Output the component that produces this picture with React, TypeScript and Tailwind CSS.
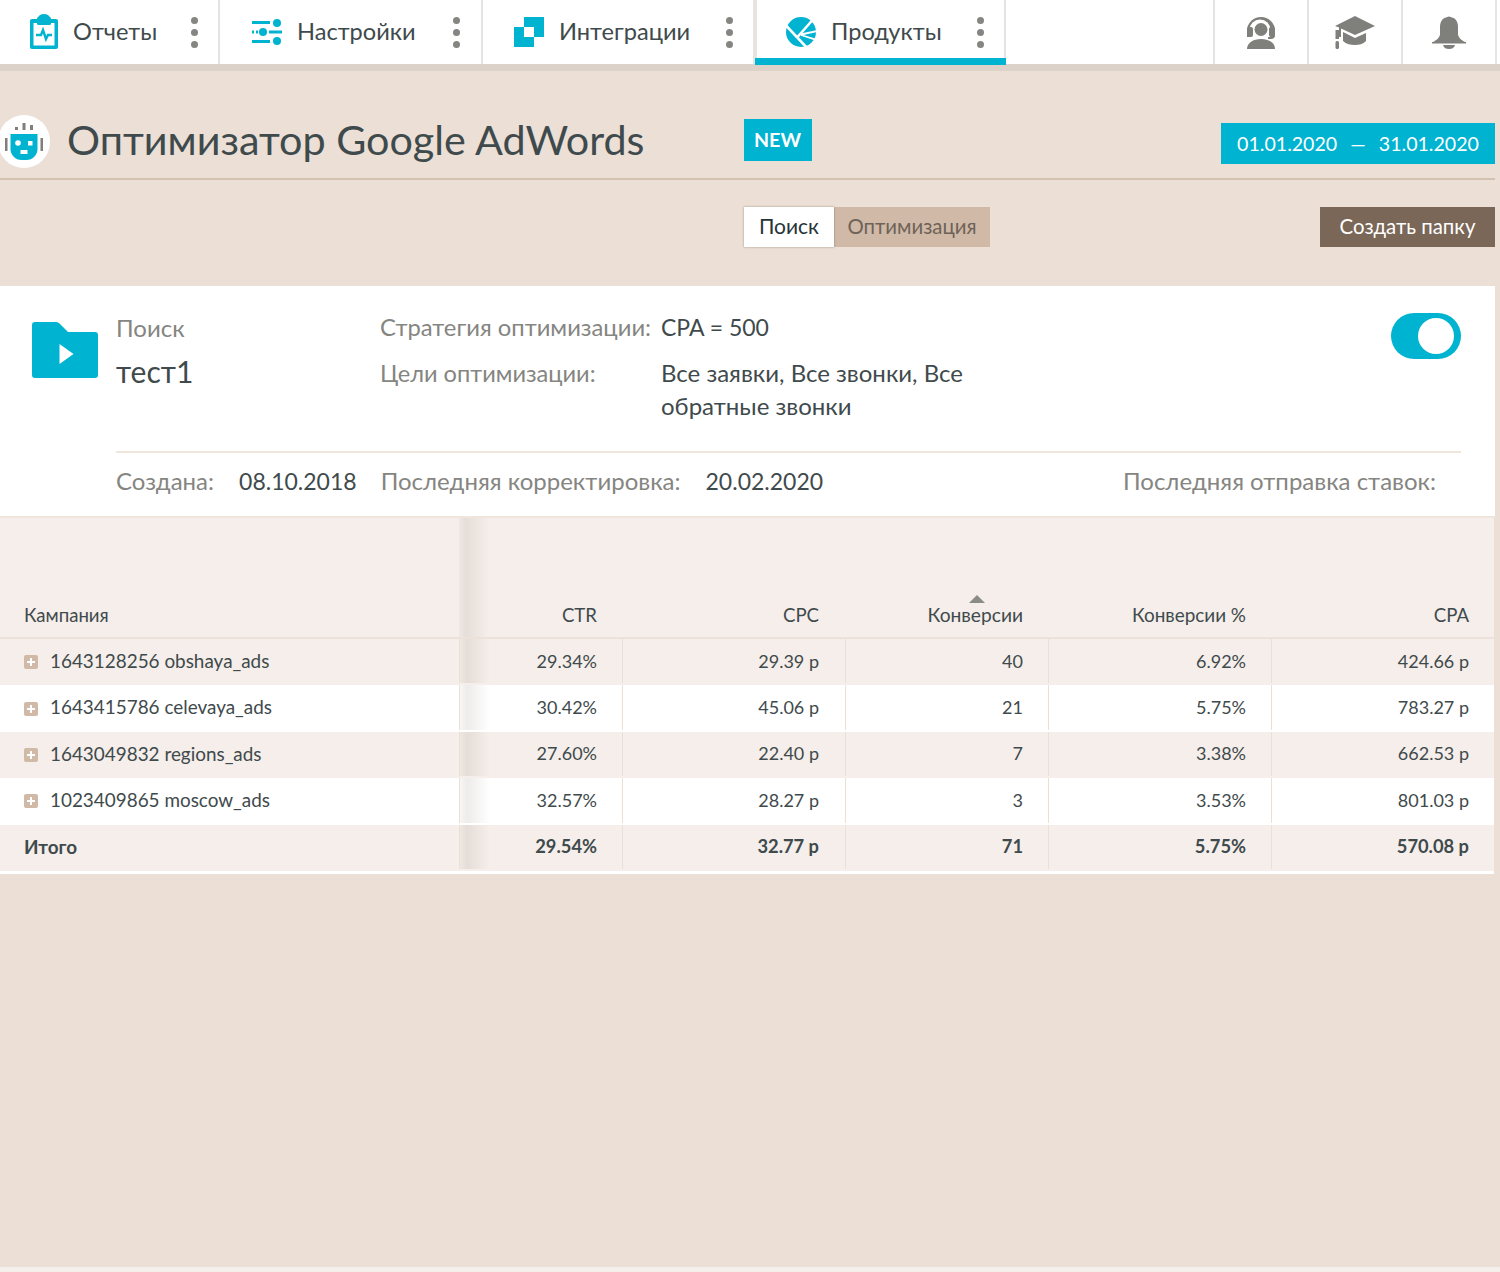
import React from "react";

const Dots = () => (
  <div className="flex flex-col gap-[5px]">
    <span className="w-[7px] h-[7px] rounded-full bg-[#858581]" />
    <span className="w-[7px] h-[7px] rounded-full bg-[#858581]" />
    <span className="w-[7px] h-[7px] rounded-full bg-[#858581]" />
  </div>
);

const C = "#00b3d0";
const G = "#7f7f7b";

const ReportIcon = () => (
  <svg width="30" height="36" viewBox="0 0 30 36">
    <path d="M3 5h6V4a6 4 0 0 1 12 0v1h6a2 2 0 0 1 2 2v26a2 2 0 0 1-2 2H3a2 2 0 0 1-2-2V7a2 2 0 0 1 2-2z" fill={C} />
    <rect x="4.500" y="9" width="21" height="22.500" fill="#fff" />
    <rect x="8" y="3" width="14" height="8" rx="1.500" fill={C} />
    <path d="M7 21h5l2-5 3 9 2-4h4" fill="none" stroke={C} strokeWidth="2.400" />
  </svg>
);

const SettingsIcon = () => (
  <svg width="30" height="28" viewBox="0 0 30 28">
    <rect x="0" y="3" width="18" height="3" fill={C} />
    <circle cx="25" cy="5" r="4" fill={C} />
    <rect x="0" y="12.500" width="2" height="3" fill={C} />
    <rect x="4" y="12.500" width="2" height="3" fill={C} />
    <circle cx="11" cy="14" r="4" fill={C} />
    <rect x="17" y="12.500" width="13" height="3" fill={C} />
    <rect x="0" y="22" width="18" height="3" fill={C} />
    <circle cx="25" cy="23" r="4" fill={C} />
  </svg>
);

const IntegrationIcon = () => (
  <svg width="30" height="30" viewBox="0 0 30 30">
    <path d="M10 0h20v20h-10v10H0V10h10z" fill={C} />
    <rect x="10" y="10" width="10" height="10" fill="#fff" />
  </svg>
);

const ProductIcon = () => (
  <svg width="30" height="30" viewBox="0 0 30 30">
    <circle cx="15" cy="15" r="15" fill={C} />
    <path d="M0 8.500L23 33" stroke="#fff" strokeWidth="2.600" />
    <path d="M11.500 20L27 2.500" stroke="#fff" strokeWidth="2.600" />
    <path d="M15 17.500L31 14M15 18L31 23" stroke="#fff" strokeWidth="1.800" />
  </svg>
);

const SupportIcon = () => (
  <svg width="30" height="33" viewBox="0 0 30 33">
    <path d="M1 15a14 14 0 0 1 28 0v4a4 4 0 0 1-4 4h-3v-2h2.500V14a10.500 10.500 0 0 0-21 0v7H1z" fill={G} />
    <circle cx="15" cy="13.500" r="6.500" fill={G} />
    <path d="M1 33c0-6 6-10 14-10s14 4 14 10z" fill={G} />
    <rect x="1" y="11" width="6" height="10" rx="2" fill={G} />
    <rect x="23" y="11" width="6" height="10" rx="2" fill={G} />
  </svg>
);

const CapIcon = () => (
  <svg width="40" height="33" viewBox="0 0 40 33">
    <path d="M20 0L40 10 20 19 6 12.500V21H4V11.500L0 10z" fill={G} />
    <path d="M8 16l12 6 11-5v8c-3 3-7 4-11 4s-9-1-12-4z" fill={G} />
    <rect x="0.500" y="25" width="3.500" height="8" rx="1.500" fill={G} />
    <rect x="0.500" y="14" width="3.500" height="9" fill={G} />
  </svg>
);

const BellIcon = () => (
  <svg width="34" height="33" viewBox="0 0 34 33">
    <circle cx="17" cy="3" r="2.500" fill={G} />
    <path d="M17 1c6 0 9 4 9 10v7c0 3 3 6 7 8v1H1v-1c4-2 7-5 7-8v-7C8 5 11 1 17 1z" fill={G} />
    <rect x="0" y="26" width="34" height="1.500" fill={G} />
    <path d="M11 29h12c-1 3-3 4-6 4s-5-1-6-4z" fill={G} />
  </svg>
);

const RobotIcon = () => (
  <div className="w-[52px] h-[53px] -ml-[2px] rounded-full bg-white flex items-center justify-center shrink-0">
    <svg width="38" height="38" viewBox="0 0 38 38">
      <rect x="10" y="5" width="3" height="3" fill={G} />
      <rect x="17.500" y="1" width="3" height="7" fill={G} />
      <rect x="25" y="3" width="3" height="5" fill={G} />
      <rect x="0" y="16" width="2.500" height="13" fill={G} />
      <rect x="35.500" y="16" width="2.500" height="13" fill={G} />
      <path d="M5.500 12h27v15a11 11 0 0 1-11 11h-5a11 11 0 0 1-11-11z" fill={C} />
      <circle cx="13" cy="21" r="2.800" fill="#fff" />
      <rect x="23" y="19" width="4.500" height="4.500" fill="#fff" />
      <rect x="15.500" y="28" width="7" height="4" fill="#fff" />
    </svg>
  </div>
);

const FolderIcon = () => (
  <svg width="66" height="56" viewBox="0 0 66 56" className="shrink-0 -mt-[1px]">
    <path d="M3 0h21c2 0 3 1 4 2l8 8h27a3 3 0 0 1 3 3v40a3 3 0 0 1-3 3H3a3 3 0 0 1-3-3V3a3 3 0 0 1 3-3z" fill={C} />
    <path d="M27.500 22l14 10-14 10z" fill="#fff" />
  </svg>
);

const Tab = ({ icon, label, cls, gap, active }: { icon: React.ReactNode; label: string; cls: string; gap: string; active?: boolean }) => (
  <div className={`relative h-[64px] flex items-center border-r-2 border-[#e6e3e0] ${cls} ${active ? "border-l-2" : ""}`}>
    {icon}
    <span className={`text-[23.6px] text-[#3f4a4c] pb-[1px] ${gap}`}>{label}</span>
    <span className="flex-1" />
    <Dots />
    {active && <span className="absolute -left-[2px] -right-[2px] top-[58px] h-[7px] bg-[#00b3d0]" />}
  </div>
);

const SideBtn = ({ children }: { children: React.ReactNode }) => (
  <div className="w-[94px] h-[64px] border-r-2 border-[#e6e3e0] flex items-center justify-center">{children}</div>
);

const rows = [
  ["1643128256 obshaya_ads", "29.34%", "29.39 р", "40", "6.92%", "424.66 р"],
  ["1643415786 celevaya_ads", "30.42%", "45.06 р", "21", "5.75%", "783.27 р"],
  ["1643049832 regions_ads", "27.60%", "22.40 р", "7", "3.38%", "662.53 р"],
  ["1023409865 moscow_ads", "32.57%", "28.27 р", "3", "3.53%", "801.03 р"],
];
const total = ["Итого", "29.54%", "32.77 р", "71", "5.75%", "570.08 р"];

const gridCols = "grid grid-cols-[459px_163px_223px_203px_223px_223px]";
const shadow = "bg-[linear-gradient(90deg,rgba(120,100,85,0.05),rgba(120,100,85,0.12)_7px,rgba(120,100,85,0)_30px)]";
const border = "border-l-[1.5px] border-[#ebe0d5]";

const Row = ({ cells, bg, bold, plus }: { cells: string[]; bg: string; bold?: boolean; plus?: boolean }) => (
  <div className={`${gridCols} h-[46.4px] pb-[2px] ${bg} text-[#3f4a4c] ${bold ? "font-bold text-[18.3px]" : "text-[18px]"}`}>
    <div className="flex items-center pl-[24px] text-[18.9px]">
      {plus && (
        <span className="w-[14px] h-[14px] mr-[12px] mt-[2px] rounded-[2px] bg-[#d0b9a6] text-white flex items-center justify-center">
          <svg width="8" height="8" viewBox="0 0 8 8">
            <path d="M4 0v8M0 4h8" stroke="#fff" strokeWidth="2" />
          </svg>
        </span>
      )}
      <span>{cells[0]}</span>
    </div>
    <div className={`flex items-center justify-end pr-[25px] ${border} ${shadow}`}>{cells[1]}</div>
    <div className={`flex items-center justify-end pr-[26px] ${border}`}>{cells[2]}</div>
    <div className={`flex items-center justify-end pr-[25px] ${border}`}>{cells[3]}</div>
    <div className={`flex items-center justify-end pr-[25px] ${border}`}>{cells[4]}</div>
    <div className={`flex items-center justify-end pr-[25px] ${border}`}>{cells[5]}</div>
  </div>
);

export default function App() {
  return (
    <div className="w-[1500px] h-[1272px] overflow-hidden bg-[#f4efeb] font-['Lato','Open_Sans',sans-serif]">
      <div className="h-[1267px] bg-[#ebdfd6]">
        <header className="flex h-[64px] bg-white">
          <Tab icon={<ReportIcon />} label="Отчеты" cls="w-[220px] pl-[29px] pr-[20px]" gap="ml-[14px]" />
          <Tab icon={<SettingsIcon />} label="Настройки" cls="w-[263px] pl-[32px] pr-[21px]" gap="ml-[15px]" />
          <Tab icon={<IntegrationIcon />} label="Интеграции" cls="w-[272px] pl-[31px] pr-[20px]" gap="ml-[15px]" />
          <Tab active icon={<ProductIcon />} label="Продукты" cls="w-[251px] pl-[29px] pr-[20px]" gap="ml-[15px]" />
          <div className="w-[209px] border-r-2 border-[#e6e3e0]" />
          <SideBtn><SupportIcon /></SideBtn>
          <SideBtn><CapIcon /></SideBtn>
          <SideBtn><BellIcon /></SideBtn>
        </header>
        <div className="h-[7px] bg-[#dcd2c9]" />

        <section className="w-[1495px]">
          <div className="h-[109px] pt-[33px] border-b-2 border-[#d3c2b2] flex items-center">
            <RobotIcon />
            <h1 className="ml-[17px] pb-[2px] text-[41.3px] text-[#3f4a4c] whitespace-nowrap">Оптимизатор Google AdWords</h1>
            <span className="ml-[99px] mb-[2px] w-[68px] h-[42px] bg-[#00b3d0] text-white text-[19.6px] font-bold flex items-center justify-center">NEW</span>
            <div className="ml-auto mt-[5px] w-[274px] h-[41px] bg-[#00b3d0] text-white text-[19.6px] flex items-center justify-center gap-[13px]">
              <span>01.01.2020</span>
              <span>—</span>
              <span>31.01.2020</span>
            </div>
          </div>

          <div className="h-[106px] pt-[27px] flex items-start">
            <div className="ml-[744px] flex h-[40px]">
              <span className="w-[90px] pb-[2px] bg-white text-[#26343a] text-[21px] flex items-center justify-center shadow-[0_0_2px_rgba(90,70,50,0.5)] relative">Поиск</span>
              <span className="w-[156px] pb-[2px] bg-[#d0b9a6] text-[#6e6359] text-[20.4px] flex items-center justify-center">Оптимизация</span>
            </div>
            <span className="ml-auto w-[175px] h-[40px] pb-[2px] bg-[#7a6757] text-white text-[20.4px] flex items-center justify-center">Создать папку</span>
          </div>

          <div className="h-[232px] bg-white border-b-2 border-[#efe5dc] flex flex-col">
            <div className="flex h-[165px] pl-[32px] pt-[37px] pr-[34px]">
              <FolderIcon />
              <div className="ml-[18px] w-[264px] -mt-[10px]">
                <div className="text-[24px] text-[#858581] leading-[30px]">Поиск</div>
                <div className="text-[30px] text-[#3f4a4c] mt-[10px] leading-[36px]">тест1</div>
              </div>
              <div className="-mt-[12px] text-[24px] leading-[33px]">
                <div className="flex">
                  <span className="w-[281px] text-[23.8px] text-[#858581]">Стратегия оптимизации:</span>
                  <span className="text-[23px] text-[#3f4a4c]">CPA = 500</span>
                </div>
                <div className="flex mt-[12px]">
                  <span className="w-[281px] pt-[1px] text-[23.6px] text-[#858581]">Цели оптимизации:</span>
                  <span className="w-[320px] text-[#3f4a4c]">Все заявки, Все звонки, Все обратные звонки</span>
                </div>
              </div>
              <div className="ml-auto -mt-[10px] w-[70px] h-[46px] rounded-full bg-[#00b3d0] flex items-center justify-end pr-[7px]">
                <span className="w-[36px] h-[36px] rounded-full bg-white" />
              </div>
            </div>
            <div className="ml-[116px] mr-[34px] h-[64px] pb-[6px] border-t-2 border-[#efe6dc] flex items-center text-[24px] whitespace-nowrap">
              <span className="text-[#858581]">Создана:</span>
              <span className="ml-[25px] text-[23px] text-[#3f4a4c]">08.10.2018</span>
              <span className="ml-[24px] text-[#858581]">Последняя корректировка:</span>
              <span className="ml-[25px] text-[23px] text-[#3f4a4c]">20.02.2020</span>
              <span className="ml-auto mr-[25px] text-[#858581]">Последняя отправка ставок:</span>
            </div>
          </div>

          <div className="w-[1494px] border-b-[3px] border-white">
            <div className={`${gridCols} h-[121px] bg-[#f5eeea] border-b-2 border-[#ece2d9] text-[18.6px] text-[#3f4a4c]`}>
              <div className="flex items-end pl-[24px] pb-[7px]">Кампания</div>
              <div className={`flex items-end justify-end pr-[25px] pb-[7px] ${shadow}`}>CTR</div>
              <div className="flex items-end justify-end pr-[26px] pb-[7px]">CPC</div>
              <div className="flex flex-col items-end justify-end pr-[25px] pb-[7px] text-[19.2px]">
                <div className="relative">
                  <span className="absolute -top-[6px] left-[41px] w-0 h-0 border-x-[8px] border-x-transparent border-b-[8px] border-b-[#8c8c85]" />
                  Конверсии
                </div>
              </div>
              <div className="flex items-end justify-end pr-[25px] pb-[8px] text-[18.9px]">Конверсии %</div>
              <div className="flex items-end justify-end pr-[25px] pb-[7px]">CPA</div>
            </div>
            <Row plus cells={rows[0]} bg="bg-[#f5eeea]" />
            <Row plus cells={rows[1]} bg="bg-white" />
            <Row plus cells={rows[2]} bg="bg-[#f5eeea]" />
            <Row plus cells={rows[3]} bg="bg-white" />
            <Row bold cells={total} bg="bg-[#f5eeea]" />
          </div>
        </section>
      </div>
    </div>
  );
}
